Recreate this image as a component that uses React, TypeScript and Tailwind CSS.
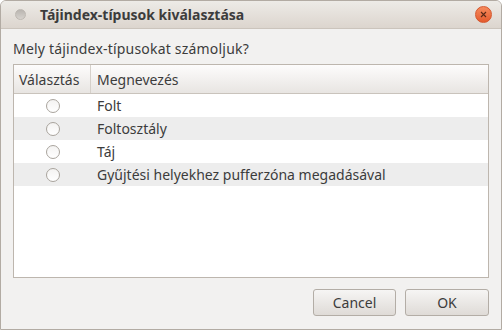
import React from "react";

const rows = ["Folt", "Foltosztály", "Táj", "Gyűjtési helyekhez pufferzóna megadásával"];

function Radio() {
  return (
    <span className="block w-[14px] h-[14px] rounded-full border border-[#a9a49d] bg-gradient-to-b from-[#f4f3f2] to-[#ffffff]" />
  );
}

export default function App() {
  return (
    <div
      className="w-[502px] h-[330px] flex flex-col bg-[#f2f1f0] border border-[#b2aba3] rounded-t-[6px] overflow-hidden text-[#3c3c3c]"
      style={{ fontFamily: '"Noto Sans", "DejaVu Sans", sans-serif' }}
    >
      {/* title bar */}
      <div className="h-[28px] flex items-center bg-gradient-to-b from-[#edebe7] to-[#dcd5ce] border-b border-[#cbc4bc] shrink-0">
        <span className="ml-[14px] w-[11px] h-[11px] rounded-full bg-gradient-to-b from-[#b9b5b0] to-[#d6d2cd] border border-[#bdb8b2]" />
        <span className="ml-[14px] text-[14px] font-bold text-[#3c3c3c]">Tájindex-típusok kiválasztása</span>
        <span className="ml-auto mr-[9px] w-[17px] h-[17px] rounded-full bg-gradient-to-b from-[#f58a5c] to-[#e45a2c] border border-[#d4562d] flex items-center justify-center">
          <svg width="7" height="7" viewBox="0 0 7 7">
            <path d="M1 1L6 6M6 1L1 6" stroke="#5a2a18" strokeWidth="1.1" />
          </svg>
        </span>
      </div>

      <div className="flex-1 flex flex-col px-[12px]">
        <div className="h-[35px] flex items-end pb-[5px] text-[14px] tracking-[0.2px]">Mely tájindex-típusokat számoljuk?</div>
        <div className="h-[214px] border border-[#bdb6ae] bg-white flex flex-col">
          <div className="h-[29px] flex text-[14px] bg-gradient-to-b from-[#fdfcfc] to-[#e8e5e2] border-b border-[#c9c3bc] shrink-0">
            <div className="w-[77px] flex items-center pl-[5px] border-r border-[#d5d0ca]">Választás</div>
            <div className="flex items-center pl-[6px]">Megnevezés</div>
          </div>
          {rows.map((r, i) => (
            <div key={r} className={`h-[23px] flex items-center text-[14px] ${i % 2 ? "bg-[#ededed]" : "bg-white"}`}>
              <div className="w-[77px] flex justify-center">
                <Radio />
              </div>
              <div className="pl-[6px]">{r}</div>
            </div>
          ))}
        </div>
        <div className="flex-1 flex items-start justify-end gap-[9px] pt-[11px]">
          <button className="w-[83px] h-[27px] rounded-[3px] border border-[#b3ada6] bg-gradient-to-b from-[#f6f5f4] to-[#dfdbd7] text-[14px] text-[#3c3c3c]">Cancel</button>
          <button className="w-[84px] h-[27px] rounded-[3px] border border-[#b3ada6] bg-gradient-to-b from-[#f6f5f4] to-[#dfdbd7] text-[14px] text-[#3c3c3c]">OK</button>
        </div>
      </div>
    </div>
  );
}
